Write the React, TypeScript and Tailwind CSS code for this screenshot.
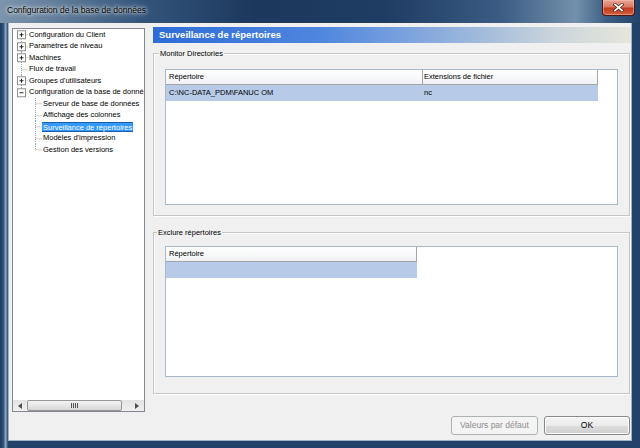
import React from 'react';

const ROW_H = 11.5;
const CY = ROW_H / 2;
const LINE = '#a0a0a0';

type TopItem = { label: string; box: '+' | '-' | null };

const topItems: TopItem[] = [
  { label: 'Configuration du Client', box: '+' },
  { label: 'Paramètres de niveau', box: '+' },
  { label: 'Machines', box: '+' },
  { label: 'Flux de travail', box: null },
  { label: "Groupes d'utilisateurs", box: '+' },
  { label: 'Configuration de la base de données', box: '-' },
];

const children = [
  'Serveur de base de données',
  'Affichage des colonnes',
  'Surveillance de répertoires',
  "Modèles d'impression",
  'Gestion des versions',
];

function TopRow({ item, first, last }: { item: TopItem; first: boolean; last: boolean }) {
  return (
    <div className="flex items-center h-[11.5px] whitespace-nowrap">
      <svg width="15" height={ROW_H} viewBox={`0 0 15 ${ROW_H}`} className="shrink-0">
        <line x1="8.5" y1={first ? CY : 0} x2="8.5" y2={last ? CY : ROW_H} stroke={LINE} strokeDasharray="1 1" />
        <line x1="8.5" y1={CY} x2="15" y2={CY} stroke={LINE} strokeDasharray="1 1" />
        {item.box && (
          <>
            <rect x="4.5" y={CY - 4} width="8" height="8" fill="#fff" stroke="#8e8f8f" />
            <line x1="6.5" y1={CY} x2="10.5" y2={CY} stroke="#222" />
            {item.box === '+' && <line x1="8.5" y1={CY - 2} x2="8.5" y2={CY + 2} stroke="#222" />}
          </>
        )}
      </svg>
      <span className="px-[1px] text-[7.5px] leading-[10px] text-black">{item.label}</span>
    </div>
  );
}

function ChildRow({ label, last, selected }: { label: string; last: boolean; selected: boolean }) {
  return (
    <div className="flex items-center h-[11.5px] whitespace-nowrap">
      <svg width="29" height={ROW_H} viewBox={`0 0 29 ${ROW_H}`} className="shrink-0">
        <line x1="22.5" y1="0" x2="22.5" y2={last ? CY : ROW_H} stroke={LINE} strokeDasharray="1 1" />
        <line x1="22.5" y1={CY} x2="29" y2={CY} stroke={LINE} strokeDasharray="1 1" />
      </svg>
      <span
        className={
          selected
            ? 'px-[1px] h-[10.5px] text-[7.5px] leading-[10px] text-white bg-[#3399ff] border-y border-[#1d5fa8]'
            : 'px-[1px] text-[7.5px] leading-[10px] text-black'
        }
      >
        {label}
      </span>
    </div>
  );
}

function Tri({ dir }: { dir: 'l' | 'r' }) {
  return (
    <svg width="4" height="6" viewBox="0 0 4 6">
      {dir === 'l' ? <polygon points="4,0 4,6 0,3" fill="#4d4d4d" /> : <polygon points="0,0 0,6 4,3" fill="#4d4d4d" />}
    </svg>
  );
}

function TreePanel() {
  return (
    <div className="ml-[3px] mt-[5px] w-[133px] h-[384px] border border-[#828790] bg-white flex flex-col overflow-hidden">
      <div className="flex-1 flex flex-col overflow-hidden">
        {topItems.map((it, i) => (
          <TopRow key={it.label} item={it} first={i === 0} last={i === topItems.length - 1} />
        ))}
        {children.map((c, i) => (
          <ChildRow key={c} label={c} last={i === children.length - 1} selected={i === 2} />
        ))}
      </div>
      <div className="h-[11px] flex bg-[linear-gradient(180deg,#e3e3e3,#f0f0f0)]">
        <div className="w-[14px] flex items-center justify-center">
          <Tri dir="l" />
        </div>
        <div className="w-[95px] rounded-[2px] border border-[#979797] bg-[linear-gradient(180deg,#f3f3f3,#e6e6e6_50%,#d6d6d6)] flex items-center justify-center">
          <svg width="7" height="5" viewBox="0 0 7 5">
            <line x1="0.5" y1="0" x2="0.5" y2="5" stroke="#555" />
            <line x1="2.5" y1="0" x2="2.5" y2="5" stroke="#555" />
            <line x1="4.5" y1="0" x2="4.5" y2="5" stroke="#555" />
            <line x1="6.5" y1="0" x2="6.5" y2="5" stroke="#555" />
          </svg>
        </div>
        <div className="w-[8px]" />
        <div className="w-[14px] flex items-center justify-center">
          <Tri dir="r" />
        </div>
      </div>
    </div>
  );
}

function HeaderCell({ w, children, pl }: { w: string; children?: React.ReactNode; pl: string }) {
  return (
    <div
      className={`${w} ${pl} h-full flex items-center border-r border-b border-[#a5a5a5] bg-[linear-gradient(180deg,#ffffff,#f7f8fa_60%,#eff1f4)] text-[7.5px] text-black whitespace-nowrap`}
    >
      {children}
    </div>
  );
}

function MonitorGroup() {
  return (
    <div className="mt-[10px] w-[477px] h-[163px] border border-[#c6c6c6] shadow-[inset_1px_1px_0_#ffffff,1px_1px_0_#ffffff] flex flex-col">
      <div className="-mt-[5px] ml-[5px] w-fit px-[1px] h-[9px] bg-[#f0f0f0] text-[7.5px] leading-[9px] text-black">
        Monitor Directories
      </div>
      <div className="ml-[11px] mt-[11px] w-[453px] h-[136px] border border-[#a7b8cb] bg-white flex flex-col">
        <div className="h-[15px] flex">
          <HeaderCell w="w-[257px]" pl="pl-[3px]">Répertoire</HeaderCell>
          <HeaderCell w="w-[175px]" pl="pl-[1px]">Extensions de fichier</HeaderCell>
        </div>
        <div className="h-[16px] w-[432px] flex bg-[#b7cbe8] text-[7.5px] text-black">
          <div className="w-[257px] pl-[3px] flex items-center whitespace-nowrap">C:\NC-DATA_PDM\FANUC OM</div>
          <div className="w-[175px] pl-[1px] flex items-center">nc</div>
        </div>
      </div>
    </div>
  );
}

function ExcludeGroup() {
  return (
    <div className="mt-[16px] w-[477px] h-[162px] border border-[#c6c6c6] shadow-[inset_1px_1px_0_#ffffff,1px_1px_0_#ffffff] flex flex-col">
      <div className="-mt-[5px] ml-[3px] w-fit px-[1px] h-[9px] bg-[#f0f0f0] text-[7.5px] leading-[9px] text-black">
        Exclure répertoires
      </div>
      <div className="ml-[11px] mt-[9px] w-[453px] h-[131px] border border-[#a7b8cb] bg-white flex flex-col">
        <div className="h-[15px] flex">
          <HeaderCell w="w-[251px]" pl="pl-[3px]">Répertoire</HeaderCell>
        </div>
        <div className="h-[16px] w-[251px] bg-[#b7cbe8]" />
      </div>
    </div>
  );
}

export default function App() {
  return (
    <div className="w-[640px] h-[448px] flex flex-col bg-[#22426a] font-['Liberation_Sans',Arial,sans-serif] overflow-hidden">
      {/* Title bar */}
      <div className="h-[23px] flex justify-between items-start bg-[linear-gradient(90deg,#7c94ac_0%,#647f9c_8%,#34557b_22%,#1c385c_40%,#1f3c62_60%,#3a5b83_78%,#7390ab_90%,#3b5c82_95%,#22426a_100%)]">
        <div className="pl-[7px] pt-[4px] text-[8.5px] leading-[12px] text-black [text-shadow:0_0_6px_#ffffff,0_0_3px_#ffffff]">
          Configuration de la base de données
        </div>
        <div className="mr-[5px] w-[33px] h-[16px] rounded-b-[4px] border border-t-0 border-[#4a1a12] bg-[linear-gradient(180deg,#e9a797_0%,#d97a63_45%,#c23b1f_55%,#d4603f_100%)] flex items-center justify-center shadow-[inset_0_0_0_1px_rgba(255,200,190,0.45)]">
          <svg width="11" height="9" viewBox="0 0 11 9">
            <path d="M2 1.5 L9 7.5 M9 1.5 L2 7.5" stroke="#5a2117" strokeWidth="3.2" strokeLinecap="square" />
            <path d="M2 1.5 L9 7.5 M9 1.5 L2 7.5" stroke="#ffffff" strokeWidth="1.7" strokeLinecap="square" />
          </svg>
        </div>
      </div>
      {/* Frame + client */}
      <div className="flex-1 px-[8px] pb-[7px] flex bg-[linear-gradient(90deg,#1d3b60_0%,#2b4c74_40%,#8ea5bc_70%,#2b4a70_100%)] bg-[length:8px_100%] bg-no-repeat">
        <div className="flex-1 bg-[#f0f0f0] flex flex-col border-x border-b border-[#9fb2c6]">
          <div className="flex">
            <TreePanel />
            <div className="ml-[8px] flex-1 flex flex-col">
              <div className="mt-[4px] h-[16px] pl-[6px] flex items-center bg-[linear-gradient(90deg,#2e6cd6_0%,#4f86df_35%,#98b5dc_65%,#cdd6dc_85%,#e6e6da_100%)] text-white font-bold text-[9.5px] whitespace-nowrap">
                Surveillance de répertoires
              </div>
              <MonitorGroup />
              <ExcludeGroup />
            </div>
          </div>
          <div className="mt-[4px] flex justify-end gap-[6px] pr-[1px]">
            <div className="w-[87px] h-[19px] rounded-[3px] border border-[#adb2b5] bg-[#f4f4f4] flex items-center justify-center text-[8.5px] text-[#8d8d8d]">
              Valeurs par défaut
            </div>
            <div className="w-[86px] h-[19px] rounded-[3px] border border-[#8a8a8a] bg-[linear-gradient(180deg,#f4f4f4_0%,#ebebeb_50%,#dddddd_51%,#cfcfcf_100%)] shadow-[inset_0_0_0_1px_#fcfcfc] flex items-center justify-center text-[8.5px] text-black">
              OK
            </div>
          </div>
        </div>
      </div>
    </div>
  );
}
